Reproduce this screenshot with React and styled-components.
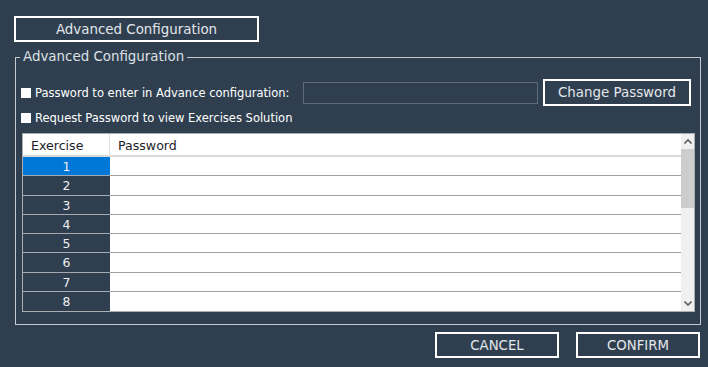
import React from "react";
import styled, { createGlobalStyle } from "styled-components";

const Global = createGlobalStyle`
  html, body { margin: 0; padding: 0; background: #2f3f50; }
  body { font-family: "DejaVu Sans", "Liberation Sans", sans-serif; }
  * { box-sizing: border-box; }
`;

const Page = styled.div`
  width: 708px;
  height: 367px;
  padding-top: 16px;
  background: #2f3f50;
  overflow: hidden;
`;

const OutlineButton = styled.button`
  display: flex;
  align-items: center;
  justify-content: center;
  width: ${(p) => p.$w}px;
  height: ${(p) => p.$h}px;
  border: 2px solid #ffffff;
  background: transparent;
  color: #e4e7ea;
  font-family: "DejaVu Sans", sans-serif;
  font-size: ${(p) => p.$fs || 13.4}px;
  padding: 0;
  margin: 0;
`;

const TopButton = styled(OutlineButton)`
  margin-left: 14px;
`;

const Group = styled.fieldset`
  margin: 7px 0 0 15px;
  width: 686px;
  border: 1px solid #c5cad0;
  padding: 14px 5px 12px 5px;
  min-width: 0;
`;

const Legend = styled.legend`
  margin-left: -1px;
  padding: 0 3px;
  font-size: 13.4px;
  line-height: 16px;
  color: #dde1e5;
`;

const OptionRow = styled.div`
  display: flex;
  align-items: center;
  height: ${(p) => p.$h}px;
  margin-top: ${(p) => p.$mt || 0}px;
`;

const Check = styled.span`
  flex: none;
  width: 10px;
  height: 10px;
  background: #ffffff;
  margin-right: 4px;
`;

const Label = styled.span`
  font-size: 11.5px;
  color: #ffffff;
  white-space: nowrap;
  flex: ${(p) => (p.$grow ? 1 : "none")};
`;

const TextInput = styled.div`
  width: 235px;
  height: 22px;
  border: 1px solid #5f6b78;
  margin-right: 5px;
`;

const RightButton = styled(OutlineButton)`
  margin-right: 4px;
`;

const TableFrame = styled.div`
  display: flex;
  margin: 8px 0 0 1px;
  height: 179px;
  border: 1px solid #a9aeb3;
  background: #ffffff;
`;

const Grid = styled.div`
  flex: 1;
  display: grid;
  grid-template-columns: 87px 1fr;
  grid-template-rows: 23px repeat(8, 19.25px);
`;

const HeadCell = styled.div`
  display: flex;
  align-items: center;
  padding: 2px 0 0 8px;
  background: #ffffff;
  color: #1d1d2b;
  font-size: 12.6px;
  border-bottom: 2px solid #dadada;
  border-right: ${(p) => (p.$divider ? "1px solid #e2e2e2" : "none")};
`;

const NumCell = styled.div`
  display: flex;
  align-items: center;
  justify-content: center;
  padding-top: 1px;
  font-size: 12.4px;
  color: #f0f0f0;
  background: ${(p) => (p.$selected ? "#0078d7" : "#2f3f50")};
  border-bottom: ${(p) => (p.$last ? "none" : "1px solid #a3a9af")};
`;

const PassCell = styled.div`
  background: #ffffff;
  border-bottom: ${(p) => (p.$last ? "none" : "1px solid #a0a0a0")};
`;

const ScrollBar = styled.div`
  width: 13px;
  display: flex;
  flex-direction: column;
  background: #f0f0f0;
`;

const Arrow = styled.div`
  height: 15px;
  display: flex;
  align-items: center;
  justify-content: center;
`;

const Track = styled.div`
  flex: 1;
`;

const Thumb = styled.div`
  height: 59px;
  background: #cdcdcd;
`;

const Footer = styled.div`
  display: flex;
  justify-content: flex-end;
  gap: 17px;
  margin-top: 7px;
  padding-right: 8px;
`;

const Chevron = ({ up }) => (
  <svg width="8" height="5" viewBox="0 0 8 5">
    <polyline
      points={up ? "0.5,4.5 4,1 7.5,4.5" : "0.5,0.5 4,4 7.5,0.5"}
      fill="none"
      stroke="#606060"
      strokeWidth="1.6"
    />
  </svg>
);

export default function App() {
  const rows = [1, 2, 3, 4, 5, 6, 7, 8];
  return (
    <>
      <Global />
      <Page>
        <TopButton $w={245} $h={26}>Advanced Configuration</TopButton>
        <Group>
          <Legend>Advanced Configuration</Legend>
          <OptionRow $h={27}>
            <Check />
            <Label $grow>Password to enter in Advance configuration:</Label>
            <TextInput />
            <RightButton $w={148} $h={27}>Change Password</RightButton>
          </OptionRow>
          <OptionRow $h={14} $mt={5}>
            <Check />
            <Label>Request Password to view Exercises Solution</Label>
          </OptionRow>
          <TableFrame>
            <Grid>
              <HeadCell $divider>Exercise</HeadCell>
              <HeadCell>Password</HeadCell>
              {rows.map((n, i) => (
                <React.Fragment key={n}>
                  <NumCell $selected={n === 1} $last={i === rows.length - 1}>{n}</NumCell>
                  <PassCell $last={i === rows.length - 1} />
                </React.Fragment>
              ))}
            </Grid>
            <ScrollBar>
              <Arrow><Chevron up /></Arrow>
              <Thumb />
              <Track />
              <Arrow><Chevron /></Arrow>
            </ScrollBar>
          </TableFrame>
        </Group>
        <Footer>
          <OutlineButton $w={124} $h={26} $fs={13.3}>CANCEL</OutlineButton>
          <OutlineButton $w={124} $h={26} $fs={13.3}>CONFIRM</OutlineButton>
        </Footer>
      </Page>
    </>
  );
}
